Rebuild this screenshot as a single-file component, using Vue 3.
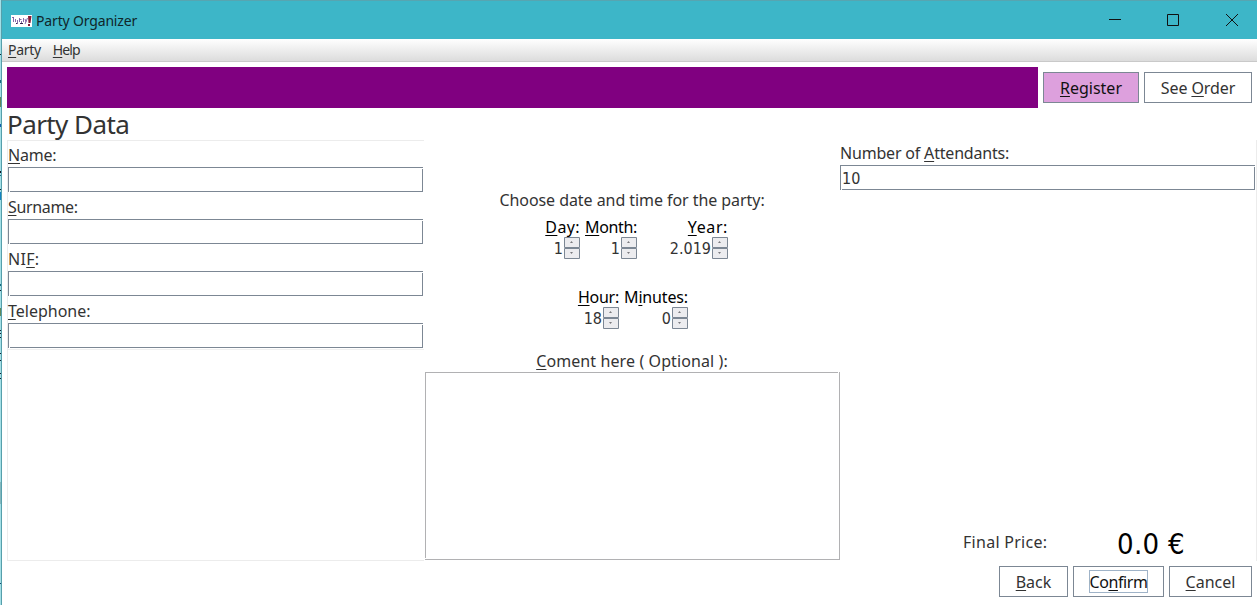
<script setup>
const fields = [
  { pre: '', key: 'N', post: 'ame:', cls: 'w-name' },
  { pre: '', key: 'S', post: 'urname:', cls: 'w-surname' },
  { pre: 'NI', key: 'F', post: ':', cls: 'w-nif' },
  { pre: '', key: 'T', post: 'elephone:', cls: 'w-tel' },
]
const dateSpinners = [
  { pre: '', key: 'D', post: 'ay:', value: '1', width: 35, cls: 'w-day' },
  { pre: '', key: 'M', post: 'onth:', value: '1', width: 52, cls: 'w-month' },
  { pre: '', key: 'Y', post: 'ear:', value: '2.019', width: 86, cls: 'w-year' },
]
const timeSpinners = [
  { pre: '', key: 'H', post: 'our:', value: '18', width: 42, cls: 'w-hour' },
  { pre: 'M', key: 'i', post: 'nutes:', value: '0', width: 64, cls: 'w-min' },
]
const marks = [
  [54, 1, '#123'], [80, 3, '#176a80'], [97, 10, '#61885a'], [124, 3, '#135cae'],
  [171, 2, '#112'], [175, 1, '#176a80'], [189, 1, '#123'], [192, 8, '#1482c4'],
  [284, 2, '#176a80'], [290, 1, '#123'], [308, 8, '#61885a'], [330, 1, '#123'],
  [333, 1, '#123'], [337, 1, '#123'], [353, 1, '#123'], [360, 1, '#123'],
  [373, 1, '#123'], [378, 1, '#123'], [482, 22, '#84b7bd'], [583, 1, '#124a70'],
]
</script>

<template>
  <div class="window">
    <div class="edge">
      <i v-for="m in marks" :key="m[0]" :style="{ top: m[0] + 'px', height: m[1] + 'px', background: m[2] }"></i>
    </div>
    <div class="frame">
      <header class="titlebar">
        <svg class="app-icon" width="21" height="12" viewBox="0 0 21 12">
          <rect width="21" height="12" fill="#fff" />
          <path d="M1 2.500h2M2.500 2v5M4.500 4v3M6.500 5v4M8.500 3v4M8.500 4.500h2M10.500 6v2M12.500 3v4M14 4l1 3M14 9l2.500-6" fill="none" stroke="#7a5aa0" stroke-width=".9" />
          <path d="M5 8.500h1M9 8.500h3" stroke="#30234f" />
          <path d="M17 1h3.500l-1 7H17.500zM17 9h2v2h-2z" fill="#851c36" />
        </svg>
        <span class="title">Party Organizer</span>
        <div class="controls">
          <svg width="12" height="12" viewBox="0 0 12 12"><path d="M0 5.5h12" /></svg>
          <svg width="12" height="12" viewBox="0 0 12 12"><path d="M.5.5h11v11H.5z" /></svg>
          <svg width="12" height="12" viewBox="0 0 12 12"><path d="M0 0l12 12M12 0L0 12" /></svg>
        </div>
      </header>
      <nav class="menubar">
        <span><u>P</u>arty</span><span class="help"><u>H</u>elp</span>
      </nav>
      <div class="toolbar">
        <div class="banner"></div>
        <button class="btn register"><span><u>R</u>egister</span></button>
        <button class="btn order"><span>See <u>O</u>rder</span></button>
      </div>
      <h1>Party Data</h1>
      <main>
        <section class="person">
          <div v-for="f in fields" :key="f.key" class="field">
            <label :class="f.cls">{{ f.pre }}<u>{{ f.key }}</u>{{ f.post }}</label>
            <div class="input"></div>
          </div>
          <div class="rest"></div>
        </section>
        <section class="schedule">
          <p class="choose">Choose date and time for the party:</p>
          <div class="spinners date">
            <div v-for="s in dateSpinners" :key="s.key" class="spinner" :style="{ width: s.width + 'px' }">
              <label :class="s.cls">{{ s.pre }}<u>{{ s.key }}</u>{{ s.post }}</label>
              <div class="value">
                <span>{{ s.value }}</span>
                <svg width="16" height="22" viewBox="0 0 16 22">
                  <path d="M.5.5h15v10H.5zM.5 11.5h15v10H.5z" fill="#ececef" stroke="#7c8794" />
                  <path d="M6 6h3L7.500 4zM6 15h3l-1.500 2z" fill="#7a7a7e" />
                </svg>
              </div>
            </div>
          </div>
          <div class="spinners time">
            <div v-for="s in timeSpinners" :key="s.key" class="spinner" :style="{ width: s.width + 'px' }">
              <label :class="s.cls">{{ s.pre }}<u>{{ s.key }}</u>{{ s.post }}</label>
              <div class="value">
                <span>{{ s.value }}</span>
                <svg width="16" height="22" viewBox="0 0 16 22">
                  <path d="M.5.5h15v10H.5zM.5 11.5h15v10H.5z" fill="#ececef" stroke="#7c8794" />
                  <path d="M6 6h3L7.500 4zM6 15h3l-1.500 2z" fill="#7a7a7e" />
                </svg>
              </div>
            </div>
          </div>
          <p class="comment-label"><u>C</u>oment here ( Optional ):</p>
          <div class="comment"></div>
        </section>
        <section class="attendants">
          <label class="w-att">Number of <u>A</u>ttendants:</label>
          <div class="input">10</div>
          <div class="price"><span class="price-label">Final Price:</span><span class="amount">0.0 €</span></div>
        </section>
      </main>
      <footer>
        <button class="btn back"><span><u>B</u>ack</span></button>
        <button class="btn confirm"><span>Co<u>n</u>firm</span></button>
        <button class="btn cancel"><span><u>C</u>ancel</span></button>
      </footer>
    </div>
  </div>
</template>

<style>
html, body { margin: 0; overflow: hidden; }
</style>

<style scoped>
* { box-sizing: border-box; }
.window {
  width: 1257px; height: 605px; display: flex; overflow: hidden; background: #fff; color: #333;
  font: 16px/20px "Noto Sans", sans-serif; font-variant-ligatures: none;
  white-space: nowrap;
}
u { text-decoration: underline; text-decoration-thickness: 1px; text-underline-offset: 2px; text-decoration-skip-ink: none; }
.edge { position: relative; width: 2px; background: #a4dfe6; border-right: 1px solid #569fab; }
.edge i { position: absolute; left: 0; width: 1px; }
.frame { width: 1255px; display: flex; flex-direction: column; }
.titlebar { height: 39px; background: #3db6c8; border-top: 1px solid #57a5b1; display: flex; align-items: center; padding-left: 9px; }
.app-icon { margin-top: 1px; }
.title { font: 14px/20px "Noto Sans", "Open Sans", sans-serif; color: #10262a; margin-left: 4px; letter-spacing: -0.16px; margin-top: 2px; }
.controls { margin-left: auto; display: flex; gap: 47px; margin-right: 19px; }
.controls svg { fill: none; stroke: #111; stroke-width: 1; }
.controls svg:first-child { margin-right: -1px; }
.menubar { height: 23px; background: linear-gradient(#fff, #dcdcdc); border-bottom: 1px solid #c9c9c9; padding: 0 6px; display: flex; gap: 12px; font-size: 14px; line-height: 21px; letter-spacing: -0.3px; }
.help { letter-spacing: -0.9px; }
.toolbar { display: flex; align-items: center; gap: 5px; height: 41px; margin: 5px 5px 0; }
.banner { width: 1031px; height: 41px; background: #800080; }
.btn { height: 31px; padding: 0; border: 1px solid #7c8794; border-radius: 0; background: #fff; color: #333; font: inherit; display: flex; align-items: center; justify-content: center; }
.register { width: 96px; background: #dda0dd; color: #111; }
.order { width: 108px; letter-spacing: -0.1px; }
h1 { height: 32px; margin: 0 0 0 5px; font-size: 26px; line-height: 32px; font-weight: 400; letter-spacing: -0.58px; }
main { display: flex; height: 421px; padding-left: 5px; }
.person { width: 417px; border: 1px solid #ececec; border-right: 0; padding-top: 4px; }
.field { height: 52px; display: flex; flex-direction: column; }
.field .input { margin-top: 2px; width: 415px; }
.rest { border-top: 1px solid #f0f0f0; margin-top: -4px; }
.input { position: relative; height: 25px; border: 1px solid #7c8794; line-height: 25px; padding-left: 1px; }
/* single-pixel gaps where the border lines meet */
.input::before, .input::after, .comment::before, .comment::after { content: ""; position: absolute; width: 1px; height: 1px; background: #fff; }
.input::before { right: -1px; top: 0; }
.input::after { left: 0; bottom: -1px; }
.comment::before { right: 0; top: -1px; }
.comment::after { left: -1px; bottom: 0; }
.input, .value, .amount { font-family: "DejaVu Sans Condensed", "DejaVu Sans", sans-serif; font-stretch: condensed; }
.schedule { width: 416px; display: flex; flex-direction: column; align-items: center; padding-top: 50px; }
p { margin: 0; height: 20px; }
.choose { letter-spacing: -0.06px; }
.w-name { letter-spacing: -0.2px; }
.w-surname { letter-spacing: -0.35px; }
.w-nif { letter-spacing: 0.3px; }
.w-day { letter-spacing: 0.4px; }
.w-month { letter-spacing: -0.35px; }
.w-year { letter-spacing: 0.6px; }
.w-hour { letter-spacing: -0.25px; }
.w-min { letter-spacing: -0.15px; }
.w-att { letter-spacing: -0.19px; }
.spinners { display: flex; }
.date { margin-top: 7px; gap: 5px; align-self: flex-start; margin-left: 121px; }
.time { margin-top: 28px; gap: 5px; align-self: flex-start; margin-left: 153px; }
.spinner { height: 42px; display: flex; flex-direction: column; align-items: flex-end; color: #000; }
.value { display: flex; height: 22px; line-height: 24px; color: #333; }
.value span { margin-right: 1px; }
.comment-label { margin-top: 22px; letter-spacing: 0.1px; }
.comment { position: relative; width: 415px; height: 188px; margin-top: 1px; border: 1px solid #b1b1b3; }
.attendants { width: 417px; display: flex; flex-direction: column; padding-top: 3px; border-right: 1px solid #ececec; }
.attendants .input { width: 415px; margin-top: 2px; }
.price { display: flex; align-items: center; height: 36px; margin-top: auto; margin-left: 123px; }
.price-label { width: 85px; letter-spacing: 0.28px; margin-top: -2px; }
.amount { font-size: 29px; color: #000; margin-left: 69px; letter-spacing: 0.3px; margin-top: 1px; }
footer { display: flex; gap: 5px; margin: 5px 5px 0 auto; }
.back { width: 69px; } .confirm { width: 91px; color: #111; } .cancel { width: 83px; }
.confirm span { border: 1px solid #9fb3c8; height: 23px; line-height: 22px; letter-spacing: -0.42px; }
</style>
